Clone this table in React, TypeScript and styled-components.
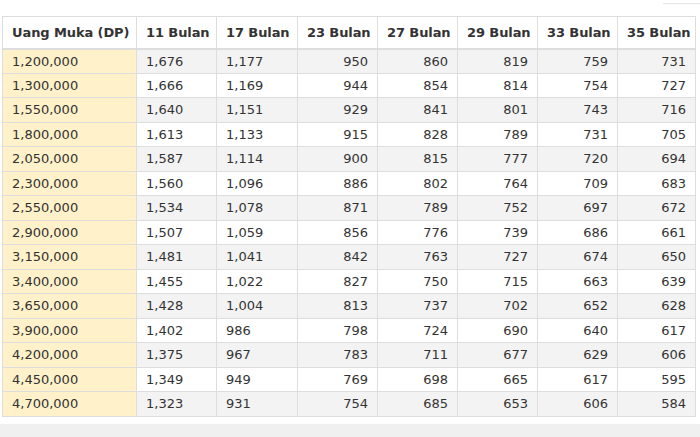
import React from "react";
import styled, { createGlobalStyle } from "styled-components";

const Global = createGlobalStyle`
  html, body { margin: 0; padding: 0; background: #ffffff; }
  body { font-family: "DejaVu Sans", Verdana, sans-serif; color: #333333; }
`;

const Page = styled.div`
  width: 700px;
  height: 437px;
  overflow: hidden;
  display: flex;
  flex-direction: column;
`;

const TopStrip = styled.div`
  height: 16px;
  flex-shrink: 0;
  display: flex;
  justify-content: flex-end;
  align-items: flex-start;
`;

const TopRule = styled.div`
  width: 37px;
  height: 1px;
  margin-top: 3px;
  background: #e6e6e6;
`;

const TableWrap = styled.div`
  padding-left: 2px;
  flex-shrink: 0;
`;

const Table = styled.table`
  border-collapse: collapse;
  table-layout: fixed;
  width: 693px;
  font-size: 13px;
  color: #333333;
`;

const HeadCell = styled.th<{ $w: number }>`
  width: ${(p) => p.$w}px;
  height: 32px;
  padding: 0 0 0 9px;
  text-align: left;
  font-weight: bold;
  background: #ffffff;
  border: 1px solid #dddddd;
  border-bottom: 2px solid #dddddd;
  white-space: nowrap;
  overflow: hidden;
  letter-spacing: -0.1px;
  box-sizing: border-box;
`;

const Row = styled.tr<{ $odd: boolean }>`
  height: 24.53px;
  background: ${(p) => (p.$odd ? "#f3f3f3" : "#ffffff")};
`;

const Cell = styled.td<{ $align: "left" | "right"; $dp?: boolean }>`
  padding: 0 ${(p) => (p.$align === "right" ? "9px" : "0")} 0
    ${(p) => (p.$align === "left" ? "9px" : "0")};
  text-align: ${(p) => p.$align};
  border: 1px solid #dddddd;
  ${(p) => (p.$dp ? "background: #fff1c9;" : "")}
  white-space: nowrap;
  box-sizing: border-box;
`;

const Footer = styled.div`
  margin-top: 7px;
  height: 14px;
  flex-shrink: 0;
  background: #f0f0f0;
`;

const headers: [string, number][] = [
  ["Uang Muka (DP)", 134],
  ["11 Bulan", 80],
  ["17 Bulan", 81],
  ["23 Bulan", 80],
  ["27 Bulan", 80],
  ["29 Bulan", 80],
  ["33 Bulan", 80],
  ["35 Bulan", 78],
];

const rows: string[][] = [
  ["1,200,000", "1,676", "1,177", "950", "860", "819", "759", "731"],
  ["1,300,000", "1,666", "1,169", "944", "854", "814", "754", "727"],
  ["1,550,000", "1,640", "1,151", "929", "841", "801", "743", "716"],
  ["1,800,000", "1,613", "1,133", "915", "828", "789", "731", "705"],
  ["2,050,000", "1,587", "1,114", "900", "815", "777", "720", "694"],
  ["2,300,000", "1,560", "1,096", "886", "802", "764", "709", "683"],
  ["2,550,000", "1,534", "1,078", "871", "789", "752", "697", "672"],
  ["2,900,000", "1,507", "1,059", "856", "776", "739", "686", "661"],
  ["3,150,000", "1,481", "1,041", "842", "763", "727", "674", "650"],
  ["3,400,000", "1,455", "1,022", "827", "750", "715", "663", "639"],
  ["3,650,000", "1,428", "1,004", "813", "737", "702", "652", "628"],
  ["3,900,000", "1,402", "986", "798", "724", "690", "640", "617"],
  ["4,200,000", "1,375", "967", "783", "711", "677", "629", "606"],
  ["4,450,000", "1,349", "949", "769", "698", "665", "617", "595"],
  ["4,700,000", "1,323", "931", "754", "685", "653", "606", "584"],
];

export default function App() {
  return (
    <Page>
      <Global />
      <TopStrip>
        <TopRule />
      </TopStrip>
      <TableWrap>
        <Table>
          <thead>
            <tr>
              {headers.map(([h, w]) => (
                <HeadCell key={h} $w={w}>
                  {h}
                </HeadCell>
              ))}
            </tr>
          </thead>
          <tbody>
            {rows.map((r, i) => (
              <Row key={r[0]} $odd={i % 2 === 0}>
                {r.map((v, j) => (
                  <Cell key={j} $align={j < 3 ? "left" : "right"} $dp={j === 0}>
                    {v}
                  </Cell>
                ))}
              </Row>
            ))}
          </tbody>
        </Table>
      </TableWrap>
      <Footer />
    </Page>
  );
}
